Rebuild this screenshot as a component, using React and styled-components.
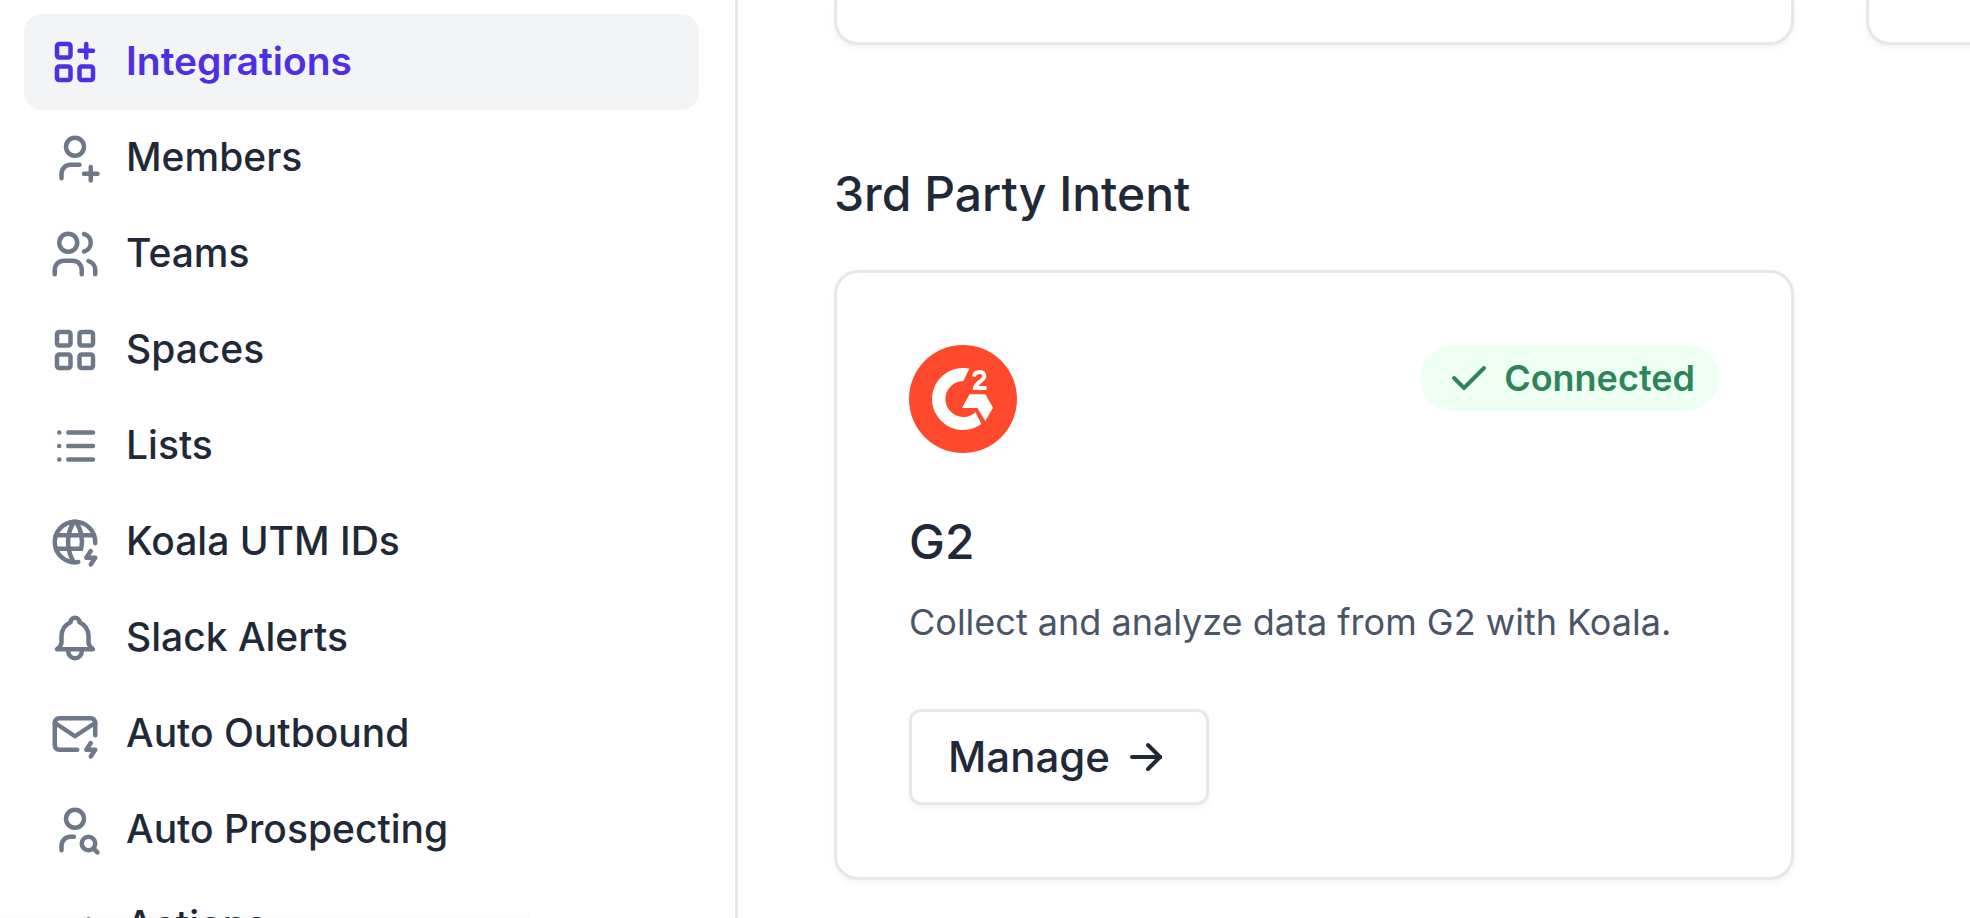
import React from "react";
import styled, { createGlobalStyle } from "styled-components";
import {
  TbApps, TbUserPlus, TbUsers, TbLayoutGrid, TbList, TbWorldBolt, TbBell,
  TbMailBolt, TbUserSearch, TbArrowMoveRight, TbCheck, TbArrowRight,
} from "react-icons/tb";

const GlobalStyle = createGlobalStyle`
  *, *::before, *::after { box-sizing: border-box; }
  body {
    margin: 0;
    background: #fff;
    color: #1f2937;
    font-family: Inter, "Liberation Sans", sans-serif;
  }
`;

const Page = styled.div`
  display: flex;
  height: 100vh;
  overflow: hidden;
`;

const Sidebar = styled.aside`
  position: relative;
  flex: none;
  width: 738px;
  padding: 14px 36px 0 24px;
  border-right: 3px solid #e5e7eb;
  overflow: hidden;
`;

const NavList = styled.ul`
  list-style: none;
  margin: 0;
  padding: 0;
`;

const NavLink = styled.a`
  display: flex;
  align-items: center;
  gap: 24px;
  height: 96px;
  padding: 0 24px;
  border-radius: 18px;
  background: ${(p) => (p.$active ? "#f3f4f6" : "transparent")};
  color: ${(p) => (p.$active ? "#4f2fe6" : "#1f2937")};
  font-size: 39px;
  font-weight: ${(p) => (p.$active ? 600 : 500)};
  line-height: 60px;
  text-decoration: none;
  white-space: nowrap;

  svg {
    flex: none;
    width: 54px;
    height: 54px;
    color: ${(p) => (p.$active ? "#4f2fe6" : "#6e7888")};
  }
`;

const Label = styled.span`
  padding-bottom: 2px;
`;

const FooterShade = styled.div`
  position: absolute;
  left: 0;
  bottom: 0;
  width: 530px;
  height: 9px;
  background: linear-gradient(to bottom, rgba(0, 0, 0, 0), rgba(0, 0, 0, 0.02));
  pointer-events: none;
`;

const Main = styled.main`
  flex: 1;
  min-width: 0;
  padding: 0 96px;
`;

const CardGrid = styled.div`
  display: grid;
  grid-template-columns: repeat(2, minmax(960px, 1fr));
  gap: 72px;
`;

const Card = styled.article`
  padding: 72px;
  border: 3px solid #e5e7eb;
  border-radius: 24px;
  background: #fff;
  box-shadow: 0 3px 6px rgba(0, 0, 0, 0.05);
`;

const CardEnd = styled(Card)`
  height: 45px;
  padding: 0;
  border-top: 0;
  border-radius: 0 0 24px 24px;
`;

const SectionTitle = styled.h2`
  margin: 113px 0 40px;
  font-size: 48px;
  font-weight: 500;
  line-height: 72px;
`;

const CardTop = styled.div`
  display: flex;
  align-items: flex-start;
  justify-content: space-between;
`;

const Logo = styled.svg`
  display: block;
  width: 108px;
  height: 108px;
`;

const Badge = styled.span`
  display: flex;
  align-items: center;
  gap: 12px;
  height: 66px;
  padding: 0 24px;
  border-radius: 33px;
  background: #eefff4;
  color: #2f855a;
  font-size: 36px;
  font-weight: 600;

  svg {
    width: 48px;
    height: 48px;
  }
`;

const CardTitle = styled.h3`
  margin: 53px 0 0;
  font-size: 48px;
  font-weight: 500;
  line-height: 72px;
`;

const CardText = styled.p`
  margin: 17px 0 60px;
  color: #4a5568;
  font-size: 36px;
  line-height: 54px;
  white-space: nowrap;
`;

const Button = styled.button`
  display: flex;
  align-items: center;
  gap: 12px;
  height: 96px;
  padding: 0 36px;
  border: 3px solid #e5e7eb;
  border-radius: 12px;
  background: #fff;
  box-shadow: 0 3px 6px rgba(0, 0, 0, 0.05);
  color: #1f2937;
  font-family: inherit;
  font-size: 42px;
  font-weight: 500;
  cursor: pointer;

  svg {
    width: 48px;
    height: 48px;
  }
`;

const navItems = [
  { label: "Integrations", icon: TbApps, active: true },
  { label: "Members", icon: TbUserPlus },
  { label: "Teams", icon: TbUsers },
  { label: "Spaces", icon: TbLayoutGrid },
  { label: "Lists", icon: TbList },
  { label: "Koala UTM IDs", icon: TbWorldBolt },
  { label: "Slack Alerts", icon: TbBell },
  { label: "Auto Outbound", icon: TbMailBolt },
  { label: "Auto Prospecting", icon: TbUserSearch },
  { label: "Actions", icon: TbArrowMoveRight },
];

function G2Logo() {
  return (
    <Logo viewBox="0 0 108 108" role="img" aria-label="G2 logo">
      <circle cx="54" cy="54" r="54" fill="#ff492c" />
      <path
        d="M60.3 23.6 L54.5 36 A18 18 0 1 0 66.5 67.3 L72.4 79 A31 31 0 1 1 54.5 23 Q57.500 23 60.3 23.600 Z"
        fill="#fff"
      />
      <path d="M60.6 49.3 H76.4 L84 62.8 L76.3 76 L68.4 63 H53 Z" fill="#fff" />
      <path
        d="M65 31.500 C65.500 28.300 67.500 27 70.500 27 C73.500 27 75.300 28.700 75.300 31.300 C75.300 35.800 66.700 37.500 66 43 H77.500"
        fill="none"
        stroke="#fff"
        strokeWidth="4"
      />
    </Logo>
  );
}

export default function App() {
  return (
    <>
      <GlobalStyle />
      <Page>
        <Sidebar>
          <nav aria-label="Settings">
            <NavList>
              {navItems.map(({ label, icon: Icon, active }) => (
                <li key={label}>
                  <NavLink href="#" $active={active} aria-current={active ? "page" : undefined}>
                    <Icon aria-hidden="true" />
                    <Label>{label}</Label>
                  </NavLink>
                </li>
              ))}
            </NavList>
          </nav>
          <FooterShade />
        </Sidebar>
        <Main>
          <CardGrid>
            <CardEnd />
            <CardEnd />
          </CardGrid>
          <SectionTitle>3rd Party Intent</SectionTitle>
          <CardGrid>
            <Card>
              <CardTop>
                <G2Logo />
                <Badge>
                  <TbCheck aria-hidden="true" />
                  Connected
                </Badge>
              </CardTop>
              <CardTitle>G2</CardTitle>
              <CardText>Collect and analyze data from G2 with Koala.</CardText>
              <Button type="button">
                <Label>Manage</Label>
                <TbArrowRight aria-hidden="true" />
              </Button>
            </Card>
          </CardGrid>
        </Main>
      </Page>
    </>
  );
}
